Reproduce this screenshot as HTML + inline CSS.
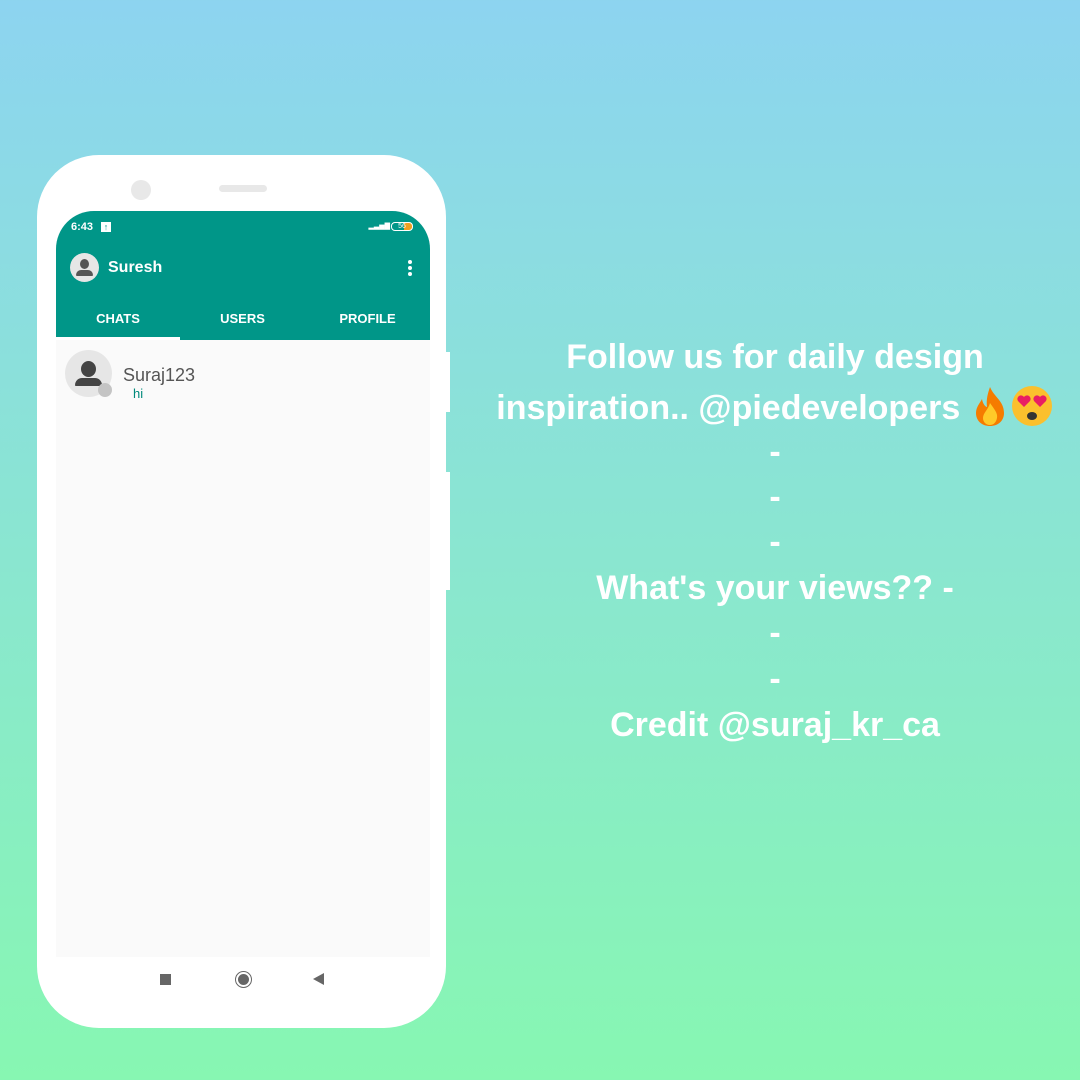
<!DOCTYPE html>
<html><head><meta charset="utf-8"><style>
*{margin:0;padding:0;box-sizing:border-box}
body{width:1080px;height:1080px;overflow:hidden;background:linear-gradient(180deg,#8dd4f0 0%,#87f7b2 100%);font-family:"Liberation Sans",sans-serif;position:relative}
.phone{position:absolute;left:37px;top:155px;width:409px;height:873px;background:#fff;border-radius:62px}
.screen{position:absolute;left:19px;top:56px;width:374px;height:746px;background:#fafafa;border-radius:38px 38px 0 0;overflow:hidden}
.bar{background:#009688;height:129px;position:relative;color:#fff}
.txt{position:absolute;color:#fff;font-weight:bold;font-size:34px;text-align:center;width:620px;left:465px}
.ln{position:absolute;width:100%;text-align:center;white-space:nowrap}
.tab{position:absolute;top:100px;text-align:center;font-size:13px;font-weight:bold}
</style></head><body>
<div class="phone">
 <div style="position:absolute;left:94px;top:25px;width:20px;height:20px;border-radius:50%;background:#e8e8e8"></div>
 <div style="position:absolute;left:182px;top:30px;width:48px;height:7px;border-radius:4px;background:#e8e8e8"></div>
 <div class="screen">
  <div class="bar">
   <div style="position:absolute;left:15px;top:10px;font-size:11px;font-weight:bold">6:43</div>
   <div style="position:absolute;left:45px;top:11px;width:10px;height:10px;background:#fff;color:#009688;font-size:9px;line-height:10px;text-align:center;font-weight:bold">↑</div>
   <div style="position:absolute;right:40px;top:11px;font-size:7px">▂▃▅▇</div>
   <div style="position:absolute;right:17px;top:11px;width:22px;height:9px;border:1px solid #fff;border-radius:4px;font-size:7px;line-height:7px;text-align:center;background:linear-gradient(90deg,#fff0 60%,#f0a020 60%)">56</div>
   <div style="position:absolute;left:14px;top:42px;width:29px;height:29px;border-radius:50%;background:#e6e6e6;overflow:hidden">
    <div style="position:absolute;left:10px;top:6px;width:9px;height:10px;border-radius:50%;background:#555"></div>
    <div style="position:absolute;left:6px;top:17px;width:17px;height:6px;border-radius:5px 5px 1px 1px;background:#555"></div>
   </div>
   <div style="position:absolute;left:52px;top:48px;font-size:16px;font-weight:bold">Suresh</div>
   <div style="position:absolute;left:352px;top:49px;width:4px;height:4px;border-radius:50%;background:#fff;box-shadow:0 6px #fff,0 12px #fff"></div>
   <div class="tab" style="left:0;width:124px">CHATS</div>
   <div class="tab" style="left:124px;width:125px">USERS</div>
   <div class="tab" style="left:249px;width:125px">PROFILE</div>
   <div style="position:absolute;bottom:0;left:0;width:124px;height:3px;background:#fff"></div>
  </div>
  <div style="position:absolute;left:9px;top:139px;width:47px;height:47px;border-radius:50%;background:#e6e6e6;overflow:hidden">
   <div style="position:absolute;left:16px;top:11px;width:15px;height:16px;border-radius:50%;background:#444"></div>
   <div style="position:absolute;left:10px;top:28px;width:27px;height:8px;border-radius:8px 8px 1px 1px;background:#444"></div>
  </div>
  <div style="position:absolute;left:42px;top:172px;width:14px;height:14px;border-radius:50%;background:#c4c4c4"></div>
  <div style="position:absolute;left:67px;top:154px;font-size:18px;color:#555">Suraj123</div>
  <div style="position:absolute;left:77px;top:175px;font-size:13px;color:#00897b">hi</div>
 </div>
 <div style="position:absolute;left:123px;top:819px;width:11px;height:11px;background:#666"></div>
 <div style="position:absolute;left:198px;top:816px;width:17px;height:17px;border-radius:50%;border:1.5px solid #666;padding:2px"><div style="width:100%;height:100%;border-radius:50%;background:#666"></div></div>
 <div style="position:absolute;left:276px;top:818px;width:0;height:0;border-top:6px solid transparent;border-bottom:6px solid transparent;border-right:11px solid #666"></div>
</div>
<div style="position:absolute;left:446px;top:352px;width:4px;height:60px;background:#fff"></div>
<div style="position:absolute;left:446px;top:472px;width:4px;height:118px;background:#fff"></div>
<div class="txt">
 <div class="ln" style="top:338px">Follow us for daily design</div>
 <div class="ln" style="top:385px">inspiration.. @piedevelopers <svg style="vertical-align:-8px" width="40" height="42" viewBox="0 0 40 42">
 <path d="M20 2C24 12 34 16 34 28C34 36 28 41 20 41C12 41 6 36 6 28C6 22 10 18 12 14C13 20 16 22 17 22C16 14 18 8 20 2Z" fill="#f57c00"/>
 <path d="M20 18C24 24 28 28 27 33C26 38 23 40 20 40C16 40 13 37 13 33C13 28 18 25 20 18Z" fill="#ffca28"/>
</svg><svg style="vertical-align:-8px" width="44" height="42" viewBox="0 0 44 42">
 <circle cx="22" cy="21" r="20" fill="#fbc02d"/>
 <path d="M14 22L8 16A3.5 3.5 0 0 1 14 12A3.5 3.5 0 0 1 20 16Z" fill="#e91e63"/>
 <path d="M30 22L24 16A3.5 3.5 0 0 1 30 12A3.5 3.5 0 0 1 36 16Z" fill="#e91e63"/>
 <ellipse cx="22" cy="31" rx="5" ry="4" fill="#333"/>
</svg></div>
 <div class="ln" style="top:433px">-</div>
 <div class="ln" style="top:478px">-</div>
 <div class="ln" style="top:523px">-</div>
 <div class="ln" style="top:569px">What's your views?? -</div>
 <div class="ln" style="top:614px">-</div>
 <div class="ln" style="top:660px">-</div>
 <div class="ln" style="top:706px">Credit @suraj_kr_ca</div>
</div>
</body></html>
